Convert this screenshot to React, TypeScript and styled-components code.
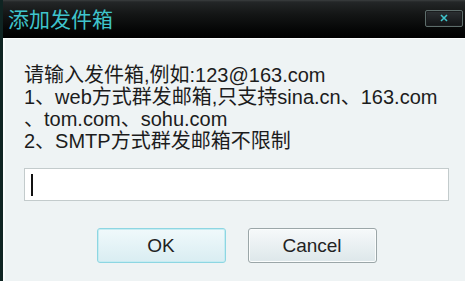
import React from 'react'
import styled, { createGlobalStyle } from 'styled-components'

const GlobalStyle = createGlobalStyle`
  html, body {
    margin: 0;
    padding: 0;
    background: #eef3f4;
  }
  body {
    font-family: 'Liberation Sans', 'Noto Sans CJK SC', sans-serif;
  }
`

const Window = styled.div`
  width: 465px;
  height: 281px;
  display: flex;
  flex-direction: column;
  border-left: 3px solid #0f2422;
  box-sizing: border-box;
  overflow: hidden;
`

const TitleBar = styled.div`
  height: 38px;
  flex: none;
  display: flex;
  align-items: center;
  justify-content: space-between;
  padding: 0 2px 0 5px;
  box-sizing: border-box;
  background: linear-gradient(#3a3e3f 0px, #232627 2px, #141616 14px, #050606 30px, #000 38px);
`

const Title = styled.div`
  color: #3fc4cc;
  font-size: 21px;
  line-height: 1;
  font-family: 'Noto Sans CJK SC', sans-serif;
  margin-top: -1px;
`

const CloseButton = styled.button`
  width: 38px;
  height: 17px;
  margin-top: -2px;
  padding: 0;
  display: flex;
  align-items: center;
  justify-content: center;
  border: 1px solid #5d6d6b;
  border-radius: 2px;
  background: linear-gradient(#2c3033, #121416);
  box-shadow: inset 0 0 0 1px #1a1c1e;
`

const Body = styled.div`
  flex: 1;
  display: flex;
  flex-direction: column;
  padding: 25px 16px 0 19px;
  background: #eef3f4;
  border-top: 1px solid #fbfdfd;
  border-left: 2px solid #fafcfc;
  color: #1c1c1c;
`

const Message = styled.div`
  font-size: 20px;
  line-height: 22px;
  white-space: nowrap;
`

const Line = styled.div``

const Field = styled.div`
  margin-top: 16px;
  height: 33px;
  box-sizing: border-box;
  border: 1px solid #c3cbcc;
  background: #fff;
  display: flex;
  align-items: center;
  padding-left: 6px;
`

const Caret = styled.span`
  width: 2px;
  height: 22px;
  background: #111;
`

const ButtonRow = styled.div`
  margin-top: 27px;
  display: flex;
  justify-content: center;
  gap: 22px;
`

const DialogButton = styled.button<{ $focused?: boolean }>`
  width: 129px;
  height: 35px;
  border-radius: 3px;
  border: 1px solid ${p => (p.$focused ? '#8dd6e2' : '#9ba6a8')};
  background: ${p =>
    p.$focused ? 'linear-gradient(#f0f9fb, #d9edf2)' : 'linear-gradient(#f6f9fa, #dde7ea)'};
  box-shadow: inset 0 0 0 1px ${p => (p.$focused ? '#c6ecf2' : '#fbfdfd')};
  font-family: 'Liberation Sans', sans-serif;
  font-size: 19px;
  color: #222;
  padding: 0;
`

const CloseIcon = () => (
  <svg width="8" height="8" viewBox="0 0 8 8">
    <path d="M1 1 L7 7 M7 1 L1 7" stroke="#3fc4cc" strokeWidth="1.6" />
  </svg>
)

export default function App() {
  return (
    <>
      <GlobalStyle />
      <Window>
        <TitleBar>
          <Title>添加发件箱</Title>
          <CloseButton>
            <CloseIcon />
          </CloseButton>
        </TitleBar>
        <Body>
          <Message>
            <Line>请输入发件箱,例如:123@163.com</Line>
            <Line>1、web方式群发邮箱,只支持sina.cn、163.com</Line>
            <Line>、tom.com、sohu.com</Line>
            <Line>2、SMTP方式群发邮箱不限制</Line>
          </Message>
          <Field>
            <Caret />
          </Field>
          <ButtonRow>
            <DialogButton $focused>OK</DialogButton>
            <DialogButton>Cancel</DialogButton>
          </ButtonRow>
        </Body>
      </Window>
    </>
  )
}
